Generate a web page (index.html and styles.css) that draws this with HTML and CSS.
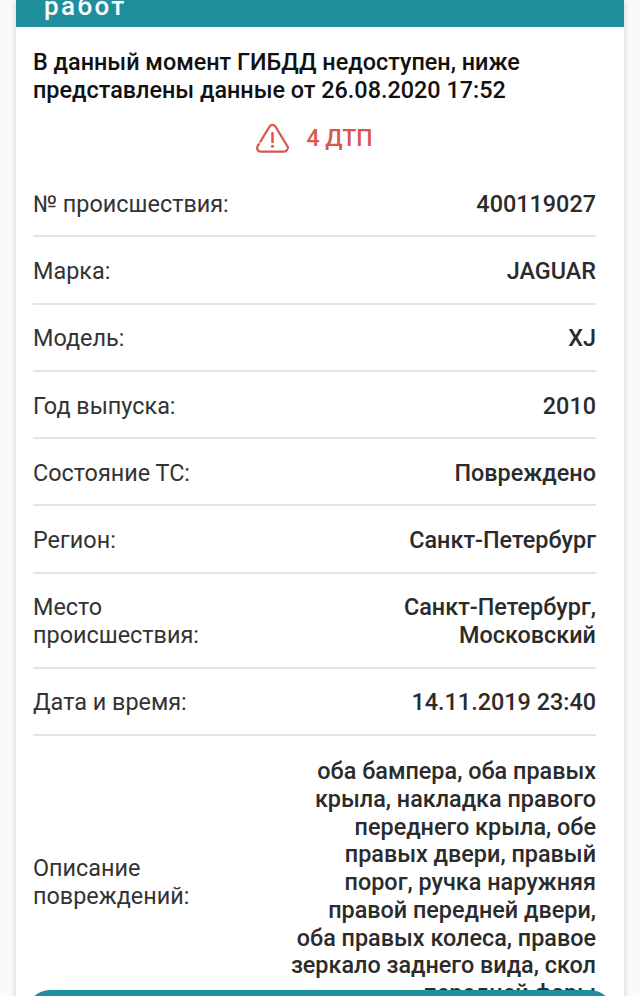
FILE: index.html
```html
<!DOCTYPE html>
<html lang="ru">
<head>
<meta charset="utf-8">
<title>ДТП</title>
<link rel="stylesheet" href="styles.css">
</head>
<body>
<div class="screen">
  <main class="card">
    <header class="card-head"><span class="card-title">работ</span></header>
    <div class="card-body">
      <p class="notice">В данный момент ГИБДД недоступен, ниже представлены данные от 26.08.2020 17:52</p>
      <div class="alert">
        <svg class="alert-icon" viewBox="0 0 36 32" width="35" height="31" aria-hidden="true">
          <path d="M33 27.8C32.2 29 31.2 29.6 30 29.6H6C2.8 29.6 1.2 26.6 2.6 24L15 3.6C16.4 1.3 19.6 1.3 21 3.6L33.4 24C33.8 24.6 34 25.2 34 25.8" fill="none" stroke="currentColor" stroke-width="2.4" stroke-linecap="round" stroke-linejoin="round" stroke-dasharray="38 3 100"/>
          <path d="M18 10.5V19.5" fill="none" stroke="currentColor" stroke-width="2.6" stroke-linecap="round"/>
          <circle cx="18" cy="24" r="1.6" fill="currentColor"/>
        </svg>
        <span class="alert-text">4 ДТП</span>
      </div>
      <dl class="rows">
        <div class="row"><dt>№ происшествия:</dt><dd>400119027</dd></div>
        <div class="row"><dt>Марка:</dt><dd>JAGUAR</dd></div>
        <div class="row"><dt>Модель:</dt><dd>XJ</dd></div>
        <div class="row"><dt>Год выпуска:</dt><dd>2010</dd></div>
        <div class="row"><dt>Состояние ТС:</dt><dd>Повреждено</dd></div>
        <div class="row"><dt>Регион:</dt><dd>Санкт-Петербург</dd></div>
        <div class="row"><dt>Место происшествия:</dt><dd>Санкт-Петербург, Московский</dd></div>
        <div class="row"><dt>Дата и время:</dt><dd>14.11.2019 23:40</dd></div>
        <div class="row row-long"><dt>Описание повреждений:</dt><dd>оба бампера, оба правых крыла, накладка правого переднего крыла, обе правых двери, правый порог, ручка наружняя правой передней двери, оба правых колеса, правое зеркало заднего вида, скол передней фары</dd></div>
      </dl>
    </div>
  </main>
  <div class="bottom-bar"></div>
</div>
</body>
</html>
```

FILE: styles.css
```css
* { box-sizing: border-box; }
html, body { margin: 0; padding: 0; background: #fff; }
body { font-family: Roboto, "Liberation Sans", sans-serif; color: #1f1f1f; }
.screen { position: relative; width: 640px; height: 996px; overflow: hidden; background: #fafafa; }
.card { width: 608px; margin: 0 auto; background: #fff; box-shadow: 0 0 6px rgba(0,0,0,.18); }
.card-head { height: 27px; background: #1f8e9d; padding-left: 28px; display: flex; align-items: flex-end; overflow: hidden; }
.card-title { color: #fff; font-size: 26px; line-height: 30px; letter-spacing: 2.4px; font-weight: 500; margin-bottom: 6px; }
.card-body { padding: 21px 28px 0 17px; }
.notice { margin: 0; font-size: 23.4px; line-height: 28px; font-weight: 500; color: #111; }
.alert { display: flex; justify-content: center; align-items: center; gap: 17px; margin-top: 14px; height: 40px; padding-right: 2px; color: #d9574b; }
.alert-icon { display: block; }
.alert-text { font-size: 23px; font-weight: 500; }
.rows { margin: 12px 0 0; }
.row { display: flex; justify-content: space-between; align-items: center; padding: 20.75px 0 16.75px; border-bottom: 2px solid #e4e4e4; font-size: 23.4px; line-height: 27.75px; }
.row:last-child { border-bottom: 0; }
.row-long { padding-top: 22.25px; }
.row dt { flex: 0 0 210px; color: #333; }
.row dd { margin: 0; text-align: right; font-weight: 500; color: #2b2b2b; flex: 0 1 auto; max-width: 310px; }
.bottom-bar { position: absolute; left: 27px; right: 27px; bottom: -40px; height: 46px; background: #1f8e9d; border-radius: 24px; }
```
